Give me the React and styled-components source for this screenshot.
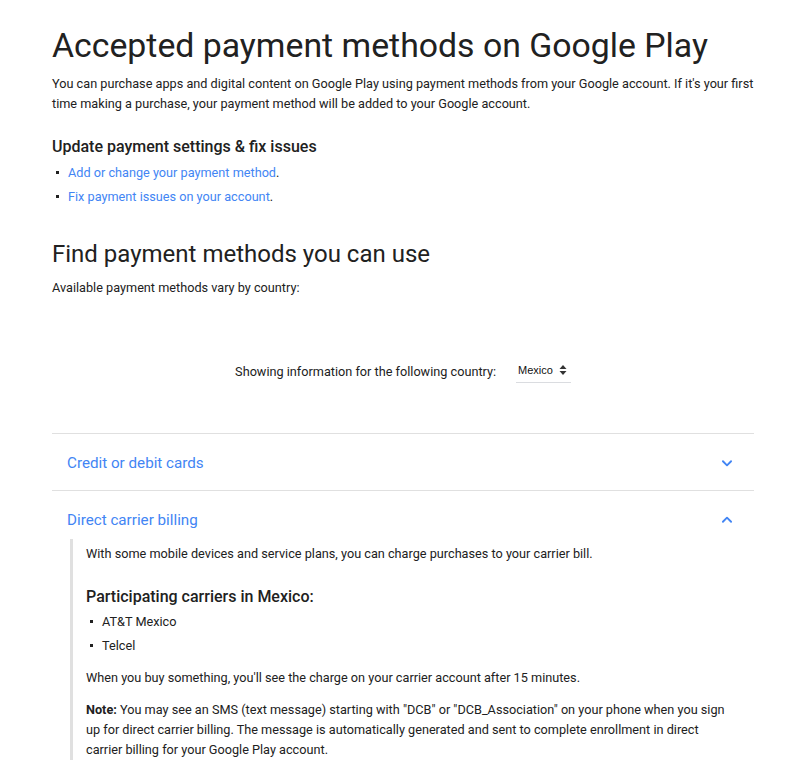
import React from "react";
import styled, { createGlobalStyle } from "styled-components";

const GlobalStyle = createGlobalStyle`
    body {
        margin: 0;
        background: #fff;
        font-family: Roboto, "Liberation Sans", sans-serif;
        color: #212121;
    }
`;

const Page = styled.div`
    width: 702px;
    padding: 25px 0 0 52px;
`;
const Title = styled.h1`
    font-size: 33.8px;
    font-weight: 400;
    line-height: 42px;
    margin: 0 0 7px;
    color: #212121;
`;
const Para = styled.p`
    font-size: 12.7px;
    line-height: 20px;
    margin: 0 0 12px;
`;
const SubHeading = styled.h3`
    font-size: 16px;
    font-weight: 500;
    line-height: 22px;
    margin: 22px 0 3px;
`;
const List = styled.ul`
    list-style: none;
    padding: 0;
    margin: 0 0 ${(props) => props.mb || 0}px;
`;
const Item = styled.li`
    position: relative;
    font-size: 12.7px;
    line-height: 24px;
    padding-left: 16px;
    &::before {
        content: "";
        position: absolute;
        left: 4px;
        top: 10px;
        width: 3px;
        height: 3px;
        background: #212121;
    }
`;
const Link = styled.a`
    color: #4285f4;
    text-decoration: none;
`;
const SectionTitle = styled.h2`
    font-size: 24px;
    font-weight: 400;
    line-height: 30px;
    margin: 30px 0 9px;
`;
const CountryRow = styled.div`
    display: flex;
    justify-content: center;
    align-items: center;
    gap: 20px;
    margin: 62px 0 50px;
    font-size: 12.7px;
`;
const Select = styled.div`
    display: flex;
    align-items: center;
    gap: 6px;
    padding: 4px 4px 6px 2px;
    border-bottom: 1px solid #dadce0;
    font-family: "Liberation Sans", Arial, sans-serif;
    font-size: 11px;
    color: #111;
`;
const Accordion = styled.div`
    border-top: 1px solid #e0e0e0;
`;
const Panel = styled.div`
    border-bottom: ${(props) => (props.open ? "none" : "1px solid #e0e0e0")};
`;
const PanelHeader = styled.div`
    display: flex;
    justify-content: space-between;
    align-items: center;
    line-height: 18px;
    padding: 20px 20px ${(props) => (props.open ? 0 : 18)}px 15px;
    color: #4285f4;
    font-size: 15.2px;
    cursor: pointer;
`;
const PanelBody = styled.div`
    margin: 10px 20px 0 18px;
    padding: 5px 0 0 13px;
    border-left: 3px solid #e0e0e0;
`;
const CarrierHeading = styled.h3`
    font-size: 16px;
    font-weight: 500;
    line-height: 22px;
    margin: 22px 0 2px;
`;

const Chevron = ({ up }) => (
    <svg width="14" height="14" viewBox="0 0 24 24" fill="none" stroke="#4285f4" strokeWidth="3.2" strokeLinecap="round" strokeLinejoin="round">
        <polyline points={up ? "5 15 12 8 19 15" : "5 9 12 16 19 9"} />
    </svg>
);

const Arrows = () => (
    <svg width="8" height="12" viewBox="0 0 8 12">
        <polygon points="4,1 7.5,5 0.5,5" fill="#333" />
        <polygon points="4,11 7.5,7 0.5,7" fill="#333" />
    </svg>
);

export default function App() {
    return (
        <>
            <GlobalStyle />
            <Page>
                <Title>Accepted payment methods on Google Play</Title>
                <Para>
                    You can purchase apps and digital content on Google Play using payment methods from your Google account. If it's your first time making a purchase, your payment method will be added to your Google account.
                </Para>
                <SubHeading>Update payment settings &amp; fix issues</SubHeading>
                <List>
                    <Item>
                        <Link href="#">Add or change your payment method</Link>.
                    </Item>
                    <Item>
                        <Link href="#">Fix payment issues on your account</Link>.
                    </Item>
                </List>
                <SectionTitle>Find payment methods you can use</SectionTitle>
                <Para>Available payment methods vary by country:</Para>
                <CountryRow>
                    <span>Showing information for the following country:</span>
                    <Select>
                        Mexico <Arrows />
                    </Select>
                </CountryRow>
                <Accordion>
                    <Panel>
                        <PanelHeader>
                            Credit or debit cards
                            <Chevron />
                        </PanelHeader>
                    </Panel>
                    <Panel open>
                        <PanelHeader open>
                            Direct carrier billing
                            <Chevron up />
                        </PanelHeader>
                        <PanelBody>
                            <Para>With some mobile devices and service plans, you can charge purchases to your carrier bill.</Para>
                            <CarrierHeading>Participating carriers in Mexico:</CarrierHeading>
                            <List mb={10}>
                                <Item>AT&amp;T Mexico</Item>
                                <Item>Telcel</Item>
                            </List>
                            <Para>When you buy something, you'll see the charge on your carrier account after 15 minutes.</Para>
                            <Para>
                                <strong>Note:</strong> You may see an SMS (text message) starting with "DCB" or "DCB_Association" on your phone when you sign up for direct carrier billing. The message is automatically generated and sent to complete enrollment in direct carrier billing for your Google Play account.
                            </Para>
                        </PanelBody>
                    </Panel>
                </Accordion>
            </Page>
        </>
    );
}
